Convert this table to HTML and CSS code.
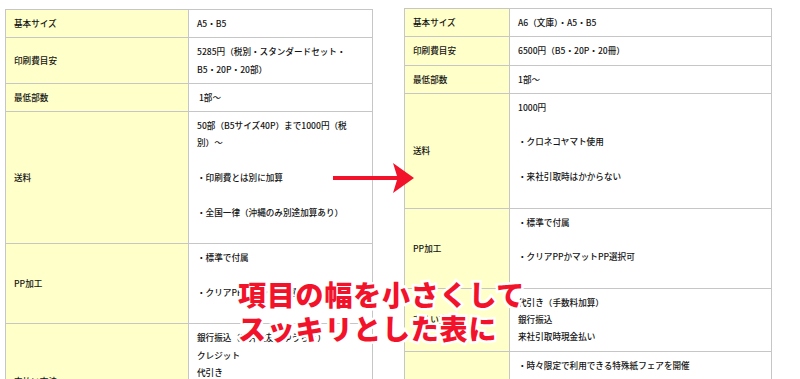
FILE: index.html
```html
<!DOCTYPE html>
<html lang="ja">
<head>
<meta charset="utf-8">
<title>仕様比較</title>
<link rel="stylesheet" href="styles.css">
</head>
<body>
<div class="page">
  <table class="spec spec-old">
    <colgroup><col class="col-label"><col></colgroup>
    <tr><th>基本サイズ</th><td>A5・B5</td></tr>
    <tr><th>印刷費目安</th><td>5285円（税別・スタンダードセット・<br>B5・20P・20部）</td></tr>
    <tr><th>最低部数</th><td>&nbsp;1部～</td></tr>
    <tr><th>送料</th><td>50部（B5サイズ40P）まで1000円（税<br>別）～<br><br>・印刷費とは別に加算<br><br>・全国一律（沖縄のみ別途加算あり）<br><br></td></tr>
    <tr><th>PP加工</th><td>・標準で付属<br><br>・クリアPPかマットPP選択可<br><br></td></tr>
    <tr><th>支払い方法</th><td>銀行振込（三井住友・ゆうちょ）<br>クレジット<br>代引き<br>コンビニ払い<br>来社時現金払い<br><br></td></tr>
  </table>

  <table class="spec spec-new">
    <colgroup><col class="col-label"><col></colgroup>
    <tr><th>基本サイズ</th><td>A6（文庫）・A5・B5</td></tr>
    <tr><th>印刷費目安</th><td>6500円（B5・20P・20冊）</td></tr>
    <tr><th>最低部数</th><td>1部～</td></tr>
    <tr><th>送料</th><td>1000円<br><br>・クロネコヤマト使用<br><br>・来社引取時はかからない<br><br></td></tr>
    <tr><th>PP加工</th><td>・標準で付属<br><br>・クリアPPかマットPP選択可<br><br></td></tr>
    <tr><th>支払い方法</th><td>代引き（手数料加算）<br>銀行振込<br>来社引取時現金払い</td></tr>
    <tr><th>特典</th><td>・時々限定で利用できる特殊紙フェアを開催<br><br>・会員登録で送料割引<br><br></td></tr>
  </table>

  <svg class="arrow" width="90" height="40" viewBox="0 0 90 40" aria-hidden="true">
    <polygon points="3,16 67,16 63,3 84,18 63,33 67,20 3,20" fill="#f2132b"/>
  </svg>

  <p class="caption">項目の幅を小さくして<br>スッキリとした表に</p>
</div>
</body>
</html>
```

FILE: styles.css
```css
html, body {
  margin: 0;
  padding: 0;
  background: #ffffff;
}

body {
  width: 800px;
  height: 379px;
  overflow: hidden;
  font-family: "Noto Sans CJK JP", "Noto Sans", sans-serif;
  color: #141414;
}

.page {
  position: relative;
  display: flex;
  align-items: flex-start;
  gap: 31px;
  padding: 8px 0 0 5px;
}

.spec {
  border-collapse: collapse;
  table-layout: fixed;
  width: 368px;
  font-size: 8.6px;
  line-height: 17.3px;
  border: 1px solid #c6c6c6;
}

.spec-old {
  margin-top: 1px;
}

.spec-old .col-label {
  width: 183px;
}

.spec-new .col-label {
  width: 105px;
}

.spec th,
.spec td {
  border: 1px solid #c6c6c6;
  padding: 5px 8px 5px 8px;
  text-align: left;
  vertical-align: middle;
  white-space: nowrap;
  font-weight: 500;
}

.spec th {
  background: #ffffc9;
}

.spec td {
  background: #ffffff;
}

.arrow {
  position: absolute;
  left: 330px;
  top: 160px;
}

.caption {
  position: absolute;
  left: 238px;
  top: 277px;
  margin: 0;
  font-family: "Noto Sans CJK JP", sans-serif;
  font-weight: 900;
  font-size: 28px;
  line-height: 34px;
  letter-spacing: 0.8px;
  color: #f2132b;
  -webkit-text-stroke: 5px #ffffff;
  paint-order: stroke fill;
  white-space: nowrap;
}
```
